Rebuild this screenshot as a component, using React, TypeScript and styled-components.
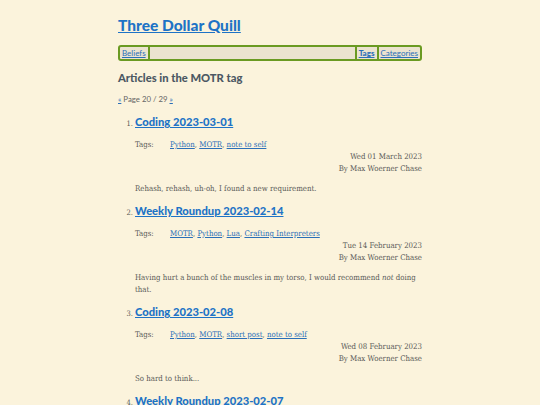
import React from 'react';
import styled, { createGlobalStyle } from 'styled-components';

const GlobalStyle = createGlobalStyle`
  body {
    margin: 0;
    background: #fbf3dc;
    font-family: "DejaVu Serif", serif;
    font-stretch: condensed;
    color: #5a5a58;
  }
`;

const Page = styled.div`
  width: 304px;
  margin: 0 auto;
  padding-top: 14px;
`;

const SiteTitle = styled.h1`
  margin: 0;
  font-family: Lato, "Open Sans", sans-serif;
  font-size: 15.5px;
  font-weight: 900;
  line-height: 22px;
  a {
    color: #1e73c6;
  }
`;

const Nav = styled.nav`
  display: flex;
  margin-top: 9px;
  height: 12px;
  border: 2px solid #6a9a22;
  border-radius: 3px;
  background: #ebe3cf;
  font-family: Lato, sans-serif;
  font-size: 8px;
  line-height: 12px;
`;

const NavItem = styled.a<{ $current?: boolean }>`
  padding: 0 2px;
  color: #2a6fb8;
  font-weight: ${p => (p.$current ? 900 : 400)};
  border-right: 2px solid #6a9a22;
  &:last-child {
    border-right: none;
  }
`;

const NavSpacer = styled.div`
  flex: 1;
  border-right: 2px solid #6a9a22;
`;

const Heading = styled.h2`
  margin: 9px 0 0;
  font-family: Lato, sans-serif;
  font-size: 11.2px;
  font-weight: 900;
  color: #4c5863;
  line-height: 16px;
`;

const Pager = styled.div`
  margin-top: 8px;
  font-family: Lato, sans-serif;
  font-size: 7.8px;
  color: #666;
  a {
    color: #2a6fb8;
  }
`;

const List = styled.ol`
  margin: 10px 0 0;
  padding-left: 17px;
  font-size: 7.5px;
  li::marker {
    color: #5a5a58;
  }
`;

const Item = styled.li`
  margin-bottom: 8px;
`;

const ItemTitle = styled.h3`
  margin: 0;
  display: inline;
  font-family: Lato, sans-serif;
  font-size: 11.2px;
  font-weight: 900;
  line-height: 16px;
  a {
    color: #1e73c6;
  }
`;

const Meta = styled.div`
  margin-top: 9px;
  font-size: 7.8px;
  line-height: 12px;
`;

const TagRow = styled.div`
  display: flex;
`;

const TagLabel = styled.span`
  width: 35px;
`;

const TagLink = styled.a`
  color: #2a6fb8;
`;

const RightLine = styled.div`
  text-align: right;
`;

const Summary = styled.p`
  margin: 8px 0 0;
  font-size: 7.8px;
  line-height: 12px;
`;

const articles = [
  {
    title: 'Coding 2023-03-01',
    tags: ['Python', 'MOTR', 'note to self'],
    date: 'Wed 01 March 2023',
    summary: <>Rehash, rehash, uh-oh, I found a new requirement.</>,
  },
  {
    title: 'Weekly Roundup 2023-02-14',
    tags: ['MOTR', 'Python', 'Lua', 'Crafting Interpreters'],
    date: 'Tue 14 February 2023',
    summary: (
      <>
        Having hurt a bunch of the muscles in my torso, I would recommend <em>not</em> doing that.
      </>
    ),
  },
  {
    title: 'Coding 2023-02-08',
    tags: ['Python', 'MOTR', 'short post', 'note to self'],
    date: 'Wed 08 February 2023',
    summary: <>So hard to think...</>,
  },
  {
    title: 'Weekly Roundup 2023-02-07',
    tags: ['MOTR', 'Python'],
    date: 'Tue 07 February 2023',
    summary: <>Still here.</>,
  },
];

function App() {
  return (
    <>
      <GlobalStyle />
      <Page>
        <SiteTitle>
          <a href="#">Three Dollar Quill</a>
        </SiteTitle>
        <Nav>
          <NavItem href="#">Beliefs</NavItem>
          <NavSpacer />
          <NavItem href="#" $current>Tags</NavItem>
          <NavItem href="#">Categories</NavItem>
        </Nav>
        <Heading>Articles in the MOTR tag</Heading>
        <Pager>
          <a href="#">«</a> Page 20 / 29 <a href="#">»</a>
        </Pager>
        <List>
          {articles.map((article, index) => (
            <Item key={index}>
              <ItemTitle>
                <a href="#">{article.title}</a>
              </ItemTitle>
              <Meta>
                <TagRow>
                  <TagLabel>Tags:</TagLabel>
                  <span>
                    {article.tags.map((tag, i) => (
                      <React.Fragment key={tag}>
                        <TagLink href="#">{tag}</TagLink>
                        {i < article.tags.length - 1 && ', '}
                      </React.Fragment>
                    ))}
                  </span>
                </TagRow>
                <RightLine>{article.date}</RightLine>
                <RightLine>By Max Woerner Chase</RightLine>
              </Meta>
              <Summary>{article.summary}</Summary>
            </Item>
          ))}
        </List>
      </Page>
    </>
  );
}

export default App;
